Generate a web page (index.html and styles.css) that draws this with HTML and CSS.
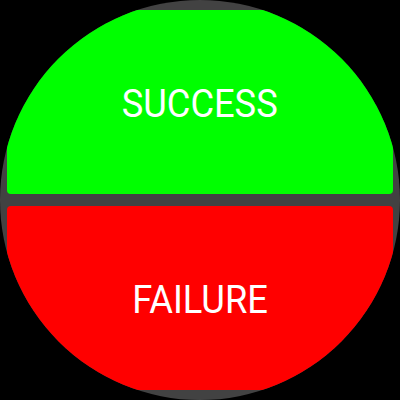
FILE: index.html
```html
<!DOCTYPE html>
<html>
<head>
<meta charset="utf-8">
<link rel="stylesheet" href="styles.css">
</head>
<body>
<div class="watch">
  <div class="panel success"><span class="label">SUCCESS</span></div>
  <div class="panel failure"><span class="label">FAILURE</span></div>
</div>
</body>
</html>
```
FILE: styles.css
```css
html, body {
  margin: 0;
  padding: 0;
  background: #000;
}
.watch {
  width: 400px;
  height: 400px;
  box-sizing: border-box;
  border-radius: 50%;
  overflow: hidden;
  background: #424242;
  padding: 10px 7px;
  display: flex;
  flex-direction: column;
  gap: 12px;
}
.panel {
  flex: 1;
  border-radius: 4px;
  display: flex;
  align-items: center;
  justify-content: center;
  color: #fff;
  font-family: Roboto, sans-serif;
  font-size: 38px;
  padding-top: 3px;
}
.label {
  display: inline-block;
  transform: scaleX(0.955);
}
.success { background: #00ff00; }
.failure { background: #ff0000; }
```
